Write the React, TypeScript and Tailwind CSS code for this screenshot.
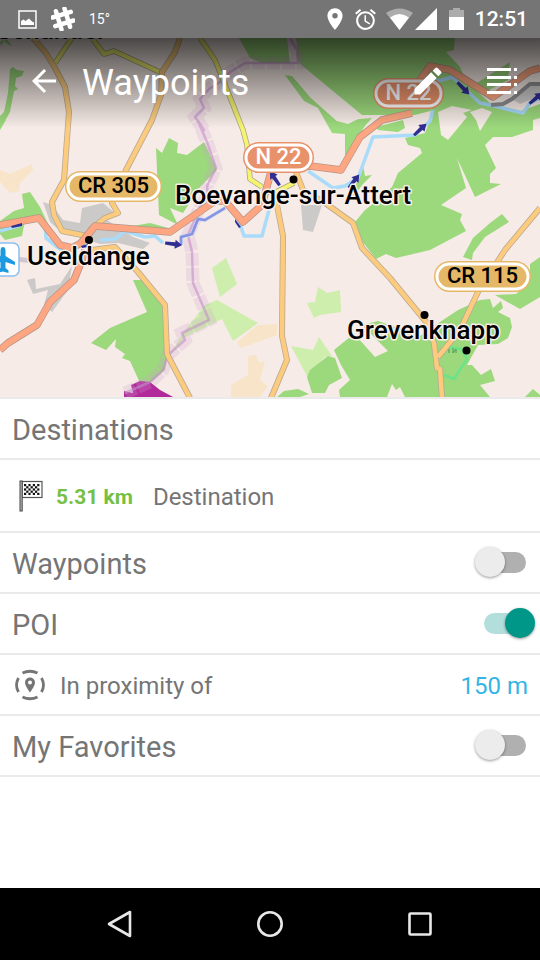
import { useState } from "react";
import type { ReactNode } from "react";
import { MdAlarm, MdArrowBack, MdEdit, MdLocationOn } from "react-icons/md";

function StatusBar() {
  return (
    <div className="flex h-[38px] shrink-0 items-center bg-[#757575] pr-3 pl-[18px] text-white">
      <svg className="h-[19px] w-[19px]" viewBox="0 0 19 19" aria-hidden="true">
        <rect x="1" y="1" width="17" height="17" fill="none" stroke="#fff" strokeWidth="1.500" />
        <path d="M3 15V11L5.500 9.500L7.500 11L11 8.500L14 11.500L16 12.500V15Z" fill="#fff" />
      </svg>
      <svg className="ml-[14px] h-6 w-6" viewBox="0 0 24 24" aria-hidden="true">
        <path
          d="M7.500 2.500V21.500M16.500 2.500V21.500M2.500 7.500H21.500M2.500 16.500H21.500"
          transform="rotate(-17 12 12)"
          fill="none"
          stroke="#fff"
          strokeWidth="4.500"
          strokeLinecap="round"
        />
      </svg>
      <span className="ml-[14px] w-6 text-sm">15°</span>
      <span className="flex-1" />
      <MdLocationOn className="h-[26px] w-[26px]" />
      <MdAlarm className="ml-[5px] h-[25px] w-[25px]" />
      <svg className="ml-2 h-[22px] w-[27px]" viewBox="0 0 27 22" aria-hidden="true">
        <path d="M0 5Q13.500 -4 27 5L13.500 22Z" fill="#fff" opacity=".4" />
        <path d="M4 9.500Q13.500 2.500 23 9.500L13.500 22Z" fill="#fff" />
      </svg>
      <svg className="ml-[2px] h-[22px] w-[22px]" viewBox="0 0 22 22" aria-hidden="true">
        <path d="M0 22L22 0V22Z" fill="#fff" />
      </svg>
      <svg className="ml-3 h-[22px] w-[15px]" viewBox="0 0 15 22" aria-hidden="true">
        <path d="M0 2H4V0H11V2H15V9H0Z" fill="#fff" opacity=".4" />
        <path d="M0 9H15V22H0Z" fill="#fff" />
      </svg>
      <time className="ml-[11px] text-[21px] leading-6 font-medium">12:51</time>
    </div>
  );
}

type Badge = { x: number; y: number; w: number; label: string; color: string; ink: string };

const badges: Badge[] = [
  { x: 65, y: 171, w: 97, label: "CR 305", color: "#e5b868", ink: "#000" },
  { x: 243, y: 142, w: 71, label: "N 22", color: "#e8926b", ink: "#fff" },
  { x: 373, y: 78, w: 71, label: "N 22", color: "#e8926b", ink: "#fff" },
  { x: 434, y: 261, w: 97, label: "CR 115", color: "#e5b868", ink: "#000" },
];

const towns = [
  { x: -4, y: 39, label: "Schandel" },
  { x: 175, y: 204, label: "Boevange-sur-Attert" },
  { x: 27, y: 265, label: "Useldange" },
  { x: 347, y: 339, label: "Grevenknapp" },
];

const forests = [
  "M239 38H455L454 50L446 52L460 67L466 80L478 92L490 103L518 112L540 104V118L533 120V130L512 137H493L485 145L496 168L490 174V183L501 184L475 197L457 158L466 188L441 205L462 214L460 220L466 231L430 250L396 258L386 254L376 259L358 236L355 222L365 210L378 200L392 187L398 173L422 153L420 148L408 145L405 138L425 133L434 110L415 115H362L299 63H262L250 58Z",
  "M285 75L292 76L310 97L337 121L372 118L365 126L345 156V134L332 133L318 108L304 101Z",
  "M376 127L403 120L405 128L398 132L378 130Z",
  "M472 86L510 62L508 80L485 92Z",
  "M463 257L473 238L490 223L502 214L509 222L485 237L473 253L472 260Z",
  "M495 295L520 309L540 297V257L530 264V282L516 294Z",
  "M334 350L350 337H357L375 357L388 351L362 325L378 321L420 336L440 322L458 310L480 300L490 299L493 308L501 301L503 308L498 312L510 318L512 327L508 338L498 344L478 345L467 365H472L481 375L491 369L495 381L480 385L490 397H405L400 387L396 390L392 384L387 397H340L339 390L350 380L341 365Z",
  "M310 370L328 356L335 358L342 378L329 385L325 393H312L307 377Z",
  "M525 397L533 389L540 395V397Z",
  "M277 397L284 391L298 389L309 394L300 397Z",
  "M133 280H142L165 308L167 355L165 370L150 383H140L130 361L122 358L125 354L115 347L116 339L106 350L91 343L110 328L147 312Z",
  "M169 138L178 143L177 153L187 155L204 142L208 150L217 170L200 187L183 213L170 208L178 225L159 215L156 148L162 153Z",
  "M0 221L14 211L24 208L22 194L30 192L40 207L50 228L36 217L25 220L22 236L5 240L0 234Z",
  "M10 69L13 67L17 70L24 71L22 76L16 78L15 86L18 89L14 91L10 112L5 121L0 126V116L4 112L8 93Z",
  "M0 42L6 38L12 46L9 45L4 41L1 46Z",
  "M0 123L6 120L0 130Z",
  "M363 165L365 176L372 175L363 184L352 198L358 178Z",
  "M127 227L150 223L172 229L165 233L133 230Z",
];

const meadows = [
  "M318 287L327 293L340 290L341 312L320 315L314 318L307 303L315 302Z",
  "M291 346L313 350L319 337L332 356L325 357L307 376Z",
  "M212 268L226 258L237 284L220 297Z",
  "M205 305L217 300L258 323L233 341L222 319L185 337L168 358L183 333Z",
];

const fields = [
  "M231 397V385L248 375V356L256 355L259 363L265 361L260 380L268 386L260 397Z",
  "M237 342L258 325L277 324V335L241 348Z",
  "M0 170L10 174L32 164L33 170L20 183L19 191L10 193L0 182Z",
];

const builtUp = [
  "M43 202L52 205L63 220L80 223L82 208L103 203L115 213L107 220L133 237L150 243L143 249L118 243L100 244L60 231L50 222Z",
  "M301 205H322L313 232L303 230Z",
  "M27 280L35 278L36 289L60 284L72 266L68 290L52 312L44 305L48 290L33 294Z",
  "M510 98L535 84H540V96L520 104Z",
];

const localRoads = [
  "M72 38L55 63",
  "M92 38L104 54L114 51L162 73",
  "M200 38L215 60L224 82L243 130L247 145L250 179L262 187",
  "M270 195L294 183",
];

const countyRoads = [
  "M33 38L46 53L55 68L65 87L69 112L64 180L52 202L54 215L62 231L87 236",
  "M180 38L175 52L162 72L161 95L152 120L126 170L115 195L112 203L118 213L105 218L90 230",
  "M92 250L115 247L138 272L165 305L167 354L190 398",
  "M296 172L303 190L325 203L353 223L362 248L390 278L427 323L434 343L437 368L440 369L442 398",
  "M540 208L505 250L478 292L460 330L438 357",
  "M276 200L283 236L282 336L287 360L271 398",
];

const nationalRoads = [
  "M0 225L39 218L60 245L72 248L81 243L95 226L170 232L215 201L225 201L243 222L262 205L272 168L310 166L341 170L360 137L382 120L412 113",
  "M414 95L420 80L430 66L450 70L493 97L530 71L540 68",
  "M85 250L82 260L74 280L50 302L37 325L8 343L0 350",
];

const rivers = [
  "M432 81L442 80L452 77L480 103L490 105L523 113L530 103L540 98",
  "M433 110L430 121L415 135L373 137L358 178L345 186L333 188L308 171",
  "M0 231L21 225",
  "M45 222L46 238L60 249L80 246",
  "M100 240L115 239L125 231L145 237L155 236L163 243",
  "M181 245V237L192 234L198 219L205 220L225 208",
  "M238 218L244 236H262L269 210",
];

const border =
  "M290 38L297 50L298 63L245 63L230 72L220 82L209 89L200 99L204 108L195 117L204 130L198 121L207 142L216 168L207 186L208 195L200 207L188 235L192 252L193 283L209 320L182 333L185 340L168 355L163 370L150 382L125 393";

const arrows = [
  { x: 180, y: 245, angle: 8 },
  { x: 468, y: 93, angle: 45 },
  { x: 425, y: 125, angle: -43 },
  { x: 358, y: 176, angle: -52 },
  { x: 541, y: 94, angle: -40 },
  { x: 271, y: 173, angle: -125 },
];

function RouteMap() {
  return (
    <svg
      className="block h-[359px] w-full bg-[#f6ebe6]"
      viewBox="0 38 540 359"
      preserveAspectRatio="xMidYMid slice"
      role="img"
      aria-label="Map"
    >
      <rect y="38" width="540" height="360" fill="#f6ebe6" />
      <path d={fields.join("")} fill="#f8e4c8" />
      <path d={meadows.join("")} fill="#cdeeac" />
      <path d={forests.join("")} fill="#9cd87c" />
      <path d="M287 38H296L299 63L362 117L348 124L337 121L310 97L291 72Z" fill="#f6ebe6" />
      <path d="M438 112L452 106L472 110L463 113L467 117L448 140L441 135ZM470 112L476 120L480 131L492 112L482 108Z" fill="#f6ebe6" />
      <path d={builtUp.join("")} fill="#cbcac9" />
      <path d="M0 255L28 258V263L0 259Z" fill="#cfc5d3" />
      <path d="M124 398V391L133 393L131 385L140 381L150 382L160 390L175 398Z" fill="#b22a9a" />
      <g fill="none" strokeLinejoin="round">
        <path d={border} stroke="#cf9fd0" strokeOpacity=".24" strokeWidth="13" strokeDasharray="13 2" strokeLinejoin="miter" />
        <path d={border} stroke="#c48fca" strokeOpacity=".6" strokeWidth="2.500" />
        <path d={rivers.join("")} stroke="#a9dbfa" strokeWidth="3.500" />
        <path d="M448 347L461 349L467 359L454 379L444 375" stroke="#6be38a" strokeWidth="2.500" />
        <path d={localRoads.join("")} stroke="#a7a588" strokeWidth="5.500" />
        <path d={localRoads.join("")} stroke="#f5f36f" strokeWidth="4" />
        <path d={countyRoads.join("")} stroke="#b5a894" strokeWidth="6" />
        <path d={countyRoads.join("")} stroke="#fccb7d" strokeWidth="4.500" />
        <path d="M491 105L503 104L512 99L530 84H540" stroke="#8d8d90" strokeWidth="4" />
        <path d={nationalRoads.join("")} stroke="#b79488" strokeWidth="7.500" />
        <path d={nationalRoads.join("")} stroke="#fda681" strokeWidth="6" />
        <path d="M181 245V237L192 234L198 219L205 220L225 208" stroke="#8e8fe0" strokeWidth="2.500" />
      </g>
      <g fill="#302e93">
        {arrows.map((a) => (
          <path
            key={a.x}
            d="M2 0L-5 -4.500V-2L-15 -1.500V1.500L-5 2V4.500Z"
            transform={`translate(${a.x} ${a.y}) rotate(${a.angle})`}
          />
        ))}
        <path d="M11 226L22 223V226L12 228ZM235 219L241 227L239 228L235 222ZM81 246L88 244V247L82 248Z" />
      </g>
      <rect x="-20" y="243" width="39" height="33" rx="6" fill="#fff" stroke="#8cc0ef" strokeWidth="1.500" />
      <path
        d="M3 247Q5.500 247 5.500 251V256L15 262V265L5.500 262V268L8.500 270.500V273L3 271.500L-3 273V270.500L0.500 268V262L-9 265V262L0.500 256V251Q0.500 247 3 247Z"
        fill="#1c9ae0"
      />
      <g fontFamily="Roboto, sans-serif" fontWeight="500">
        {badges.map((b) => (
          <g key={`${b.x}-${b.label}`}>
            <rect x={b.x} y={b.y} width={b.w} height="31" rx="15.500" fill={b.color} />
            <rect x={b.x + 3} y={b.y + 3} width={b.w - 6} height="25" rx="12.500" fill={b.color} stroke="#fff" strokeWidth="3" />
            <text x={b.x + b.w / 2} y={b.y + 22} textAnchor="middle" fontSize="22" fill={b.ink}>
              {b.label}
            </text>
          </g>
        ))}
        <g fill="#000" stroke="#f8efeb" strokeWidth="3" paintOrder="stroke" strokeLinejoin="round" fontSize="26">
          {towns.map((t) => (
            <text key={t.label} x={t.x} y={t.y}>
              {t.label}
            </text>
          ))}
        </g>
      </g>
      <circle cx="89" cy="240" r="4" />
      <circle cx="293.500" cy="179.500" r="4" />
      <circle cx="424.500" cy="315" r="4" />
      <circle cx="466.500" cy="350.500" r="4" />
      <path d="M449 349V353M453 348V353L456 349V353" fill="none" stroke="#4f9a55" />
    </svg>
  );
}

function Header() {
  return (
    <header className="absolute inset-x-0 top-0 flex h-[90px] items-center bg-linear-to-b from-black/70 to-transparent pr-[22px] pl-[26px] text-white">
      <button type="button" aria-label="Back" className="-mt-1">
        <MdArrowBack className="h-9 w-9" />
      </button>
      <h1 className="ml-5 flex-1 text-4xl">Waypoints</h1>
      <button type="button" aria-label="Edit" className="-mt-1">
        <MdEdit className="h-9 w-9" />
      </button>
      <button type="button" aria-label="List" className="-mt-1 ml-10">
        <svg className="h-[26px] w-8" viewBox="0 0 32 26">
          <path
            d="M1 0H25V3H1ZM28 0H31V3H28ZM1 8H25V11H1ZM28 8H31V11H28ZM1 15H25V18H1ZM28 15H31V18H28ZM1 23H25V26H1ZM28 23H31V26H28Z"
            fill="#fff"
          />
        </svg>
      </button>
    </header>
  );
}

function Row({ children }: { children: ReactNode }) {
  return <div className="flex h-[61px] items-center border-b-2 border-[#eaeaea] px-3">{children}</div>;
}

function ToggleRow({ id, label, initial }: { id: string; label: string; initial: boolean }) {
  const [on, setOn] = useState(initial);
  return (
    <Row>
      <label htmlFor={id} className="flex-1 pt-[2px] text-[29px] leading-9">
        {label}
      </label>
      <input
        id={id}
        type="checkbox"
        role="switch"
        checked={on}
        onChange={(e) => setOn(e.target.checked)}
        className="relative mr-[2px] h-[21px] w-[42px] appearance-none rounded-full bg-[#b0b0b0] before:absolute before:-top-[5px] before:-left-[9px] before:h-[30px] before:w-[30px] before:rounded-full before:bg-[#ececec] before:shadow-[0_1px_3px_rgba(0,0,0,0.4)] checked:bg-[#b2dfdb] checked:before:left-[21px] checked:before:bg-[#009688]"
      />
    </Row>
  );
}

function FlagIcon() {
  const squares: ReactNode[] = [];
  for (let row = 0; row < 5; row++) {
    for (let col = 0; col < 7; col++) {
      if ((row + col) % 2 === 0) {
        squares.push(<rect key={`${row}-${col}`} x={5 + col * 2.2} y={4 + row * 2.2} width="2.200" height="2.200" />);
      }
    }
  }
  return (
    <svg className="h-8 w-6" viewBox="0 0 24 32" aria-hidden="true">
      <rect x="3" y="1.500" width="20" height="16" fill="#fff" stroke="#555" strokeWidth="1.200" />
      <rect x="1" y="1" width="2.200" height="30" fill="#bbb" stroke="#444" />
      <g fill="#111">{squares}</g>
    </svg>
  );
}

function ProximityIcon() {
  return (
    <svg className="h-8 w-8" viewBox="0 0 32 32" aria-hidden="true">
      <g fill="none" stroke="#757575" strokeWidth="2.800">
        <path d="M8.500 4Q16 0.500 23.500 4M8.500 28Q16 31.500 23.500 28M4.500 9Q0.500 16 4.500 23M27.500 9Q31.500 16 27.500 23" />
      </g>
      <path
        d="M16 8.500A5 5 0 0 0 11 13.500C11 17 16 23.500 16 23.500S21 17 21 13.500A5 5 0 0 0 16 8.500ZM16 11.500A2 2 0 1 1 16 15.500A2 2 0 1 1 16 11.500Z"
        fill="#757575"
        fillRule="evenodd"
      />
    </svg>
  );
}

function NavigationBar() {
  return (
    <nav className="flex h-[72px] shrink-0 items-center bg-black px-[45px]">
      <button type="button" aria-label="Back" className="flex flex-1 justify-center">
        <svg className="h-7 w-7" viewBox="0 0 28 28">
          <path d="M3 14L24 2V26Z" fill="none" stroke="#e8e8e8" strokeWidth="2.600" strokeLinejoin="round" />
        </svg>
      </button>
      <button type="button" aria-label="Home" className="flex flex-1 justify-center">
        <svg className="h-7 w-7" viewBox="0 0 28 28">
          <circle cx="14" cy="14" r="11.700" fill="none" stroke="#e8e8e8" strokeWidth="2.600" />
        </svg>
      </button>
      <button type="button" aria-label="Recent apps" className="flex flex-1 justify-center">
        <svg className="h-7 w-7" viewBox="0 0 28 28">
          <rect x="3.500" y="3.500" width="21" height="21" rx="1" fill="none" stroke="#e8e8e8" strokeWidth="2.600" />
        </svg>
      </button>
    </nav>
  );
}

export default function App() {
  return (
    <div className="flex min-h-screen flex-col bg-white font-['Roboto',sans-serif] text-[#757575]">
      <StatusBar />
      <div className="relative border-b-2 border-[#eaeaea]">
        <RouteMap />
        <Header />
      </div>
      <main className="flex-1">
        <Row>
          <h2 className="pt-[2px] text-[29px] leading-9">Destinations</h2>
        </Row>
        <div className="flex h-[73px] items-center border-b-2 border-[#eaeaea] px-[19px] text-2xl">
          <FlagIcon />
          <span className="ml-[13px] pt-[2px] text-[21px] font-bold text-[#76c043]">5.31 km</span>
          <span className="ml-5 pt-[2px]">Destination</span>
        </div>
        <ToggleRow id="waypoints" label="Waypoints" initial={false} />
        <ToggleRow id="poi" label="POI" initial={true} />
        <Row>
          <span className="ml-[2px]">
            <ProximityIcon />
          </span>
          <span className="ml-[14px] flex-1 pt-[2px] text-2xl">In proximity of</span>
          <button type="button" className="pt-[2px] text-2xl text-[#33b5e5]">
            150 m
          </button>
        </Row>
        <ToggleRow id="favorites" label="My Favorites" initial={false} />
      </main>
      <NavigationBar />
    </div>
  );
}
